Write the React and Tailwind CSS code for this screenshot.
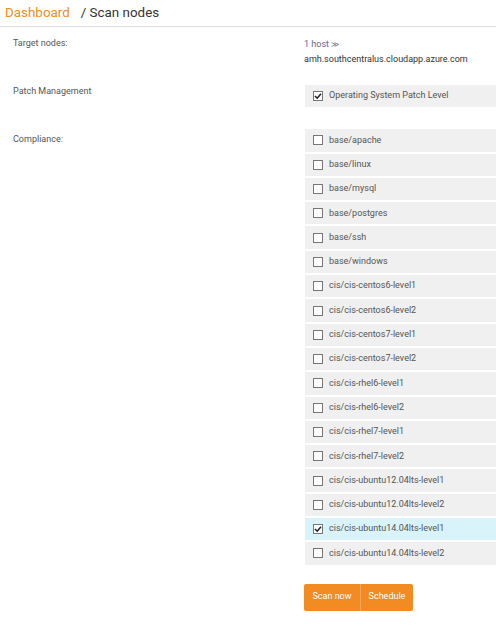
import React, { useState } from 'react'

const profiles = [
  "base/apache",
  "base/linux",
  "base/mysql",
  "base/postgres",
  "base/ssh",
  "base/windows",
  "cis/cis-centos6-level1",
  "cis/cis-centos6-level2",
  "cis/cis-centos7-level1",
  "cis/cis-centos7-level2",
  "cis/cis-rhel6-level1",
  "cis/cis-rhel6-level2",
  "cis/cis-rhel7-level1",
  "cis/cis-rhel7-level2",
  "cis/cis-ubuntu12.04lts-level1",
  "cis/cis-ubuntu12.04lts-level2",
  "cis/cis-ubuntu14.04lts-level1",
  "cis/cis-ubuntu14.04lts-level2",
]

function Box({ checked }) {
  return (
    <span className="w-[10px] h-[10px] border border-[#777] bg-white flex items-center justify-center shrink-0">
      {checked && (
        <svg width="8" height="8" viewBox="0 0 8 8">
          <path d="M1 4 L3.2 6.2 L7 1.8" fill="none" stroke="#222" strokeWidth="1.6" />
        </svg>
      )}
    </span>
  )
}

function Row({ label, checked, highlight, onToggle }) {
  return (
    <div
      className={"h-[22.3px] flex items-center gap-[6px] pl-[8px] cursor-pointer " + (highlight ? "bg-[#d9f3fb]" : "bg-[#f0f0f0]")}
      onClick={onToggle}
    >
      <Box checked={checked} />
      <span className="text-[9px] text-[#555]">{label}</span>
    </div>
  )
}

export default function App() {
  const [patch, setPatch] = useState(true)
  const [selected, setSelected] = useState({ "cis/cis-ubuntu14.04lts-level1": true })

  return (
    <div className="min-h-screen bg-white font-['Roboto',sans-serif]">
      {/* Header */}
      <div className="h-[27px] border-b border-[#ddd] flex items-center pl-[5px] text-[13.4px] leading-none">
        <span className="text-[#f28c22]">Dashboard</span>
        <span className="ml-[11px] text-[#333]">/ Scan nodes</span>
      </div>

      <div className="grid grid-cols-[304px_1fr] text-[9px] text-[#555]">
        {/* Target nodes */}
        <div className="pl-[13px] pt-[10px]">Target nodes:</div>
        <div className="pt-[10px] leading-[15px]">
          <div className="text-[#6a6494]">1 host <span className="text-[8px]">&#8811;</span></div>
          <div className="text-[#333]">amh.southcentralus.cloudapp.azure.com</div>
        </div>

        {/* Patch management */}
        <div className="pl-[13px] pt-[18px]">Patch Management</div>
        <div className="pt-[18px] pl-[1px]">
          <Row label="Operating System Patch Level" checked={patch} onToggle={() => setPatch(p => !p)} />
        </div>

        {/* Compliance */}
        <div className="pl-[13px] pt-[26px]">Compliance:</div>
        <div className="pt-[22px] pl-[1px] flex flex-col gap-[2px]">
          {profiles.map(p => (
            <Row
              key={p}
              label={p}
              checked={!!selected[p]}
              highlight={!!selected[p]}
              onToggle={() => setSelected(s => ({ ...s, [p]: !s[p] }))}
            />
          ))}
        </div>

        <div></div>
        <div className="pt-[19px] flex">
          <button className="h-[27px] w-[56px] bg-[#f28c22] text-white text-[9px] rounded-l-[2px]">Scan now</button>
          <button className="h-[27px] w-[53px] bg-[#f28c22] text-white text-[9px] rounded-r-[2px] border-l border-[#f5a55a]">Schedule</button>
        </div>
      </div>
    </div>
  )
}
